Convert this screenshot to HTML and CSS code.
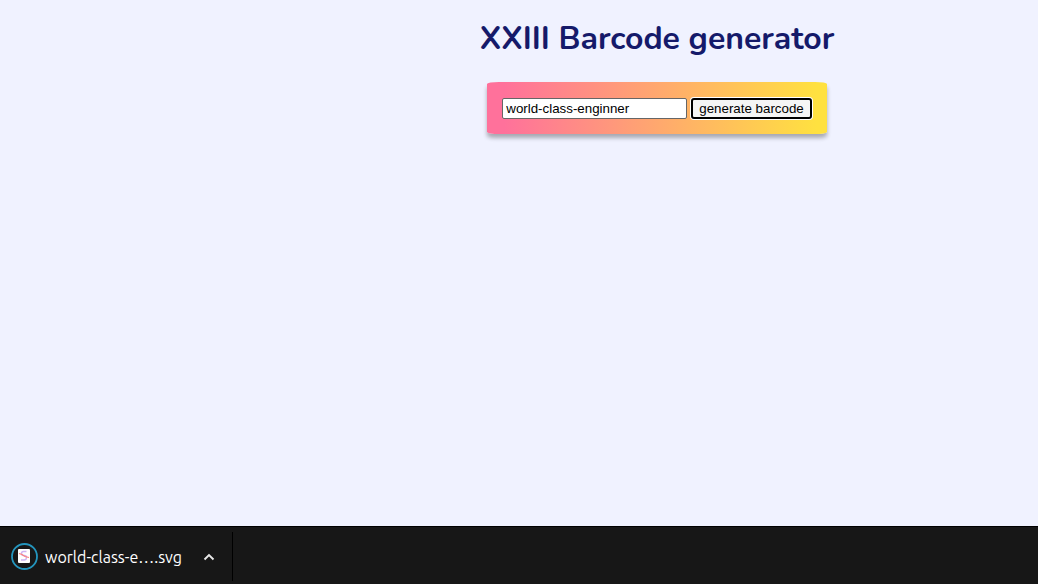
FILE: index.html
```
<!DOCTYPE html>
<html lang="en">
<head>
<meta charset="utf-8">
<title>XXIII Barcode generator</title>
<link rel="stylesheet" href="styles.css">
</head>
<body>
<main class="page">
  <h1 class="title">XXIII Barcode generator</h1>
  <form class="card">
    <input class="field" type="text" value="world-class-enginner" aria-label="Barcode text">
    <button class="generate" type="button">generate barcode</button>
  </form>
</main>
<footer class="downloads">
  <div class="download">
    <svg class="file-icon" viewBox="0 0 28 28" aria-hidden="true">
      <circle cx="14.500" cy="13.500" r="12.5" fill="none" stroke="#2495bd" stroke-width="1.8"/>
      <rect x="8" y="6" width="12" height="14" rx="1" fill="#fff"/>
      <path d="M16.500 8.500h-3q-2 0-2 2t2 2h1q2 0 2 2t-2 2.500h-3.500" fill="none" stroke="#cdb4f2" stroke-width="1.500"/>
      <path d="M9 10.500l3 1 3 2 4 1" fill="none" stroke="#ff8078" stroke-width="1.100"/>
    </svg>
    <span class="file-name">world-class-e….svg</span>
    <button class="more" type="button" aria-label="Download options">
      <svg class="chevron" viewBox="0 0 12 8" aria-hidden="true"><path d="M1.500 6.500L6 2l4.500 4.500" fill="none" stroke="#e8e8e8" stroke-width="1.900"/></svg>
    </button>
  </div>
</footer>
</body>
</html>
```
FILE: styles.css
```
* {
  box-sizing: border-box;
}

body {
  margin: 0;
  min-height: 100vh;
  display: flex;
  flex-direction: column;
  background: #f0f2ff;
}

.page {
  flex: 1;
  display: flex;
  flex-direction: column;
  align-items: center;
  gap: 22px;
  padding: 16px 0 16px 276px;
}

.title {
  margin: 0;
  padding-top: 2px;
  font: bold 32px/42px Nunito, Lato, sans-serif;
  color: #151a6a;
}

.card {
  display: flex;
  align-items: center;
  gap: 4px;
  padding: 16px 15px 15px;
  border-radius: 12px / 2px;
  background: linear-gradient(to right, #ff719b 5%, #ffe140 97%);
  box-shadow: 0 4px 4px rgba(0, 0, 0, 0.3);
}

.field,
.generate {
  font-family: "Liberation Sans", Arial, sans-serif;
  color: #000;
}

.field {
  width: 185px;
  height: 21px;
  padding: 1px 3px;
  border: 1px solid #666;
  border-radius: 2px;
  background: #fff;
}

.generate {
  height: 21px;
  padding: 1px 6px;
  border: 2px solid #000;
  border-radius: 3px;
  background: #f5f5f5;
  box-shadow: 0 0 0 1px #fff;
}

.downloads {
  display: flex;
  height: 58px;
  padding: 5px 0 3px;
  border-top: 1px solid #000;
  background: #171717;
}

.download {
  display: flex;
  align-items: center;
  padding: 0 11px 0 10px;
  border-right: 1px solid #000;
}

.file-icon {
  width: 28px;
  height: 28px;
}

.file-name {
  margin-left: 7px;
  font: 16px/24px Ubuntu, "Noto Sans", sans-serif;
  color: #fff;
}

.more {
  display: flex;
  margin-left: 15px;
  padding: 6px;
  border: 0;
  background: none;
}

.chevron {
  width: 12px;
  height: 8px;
}
```
